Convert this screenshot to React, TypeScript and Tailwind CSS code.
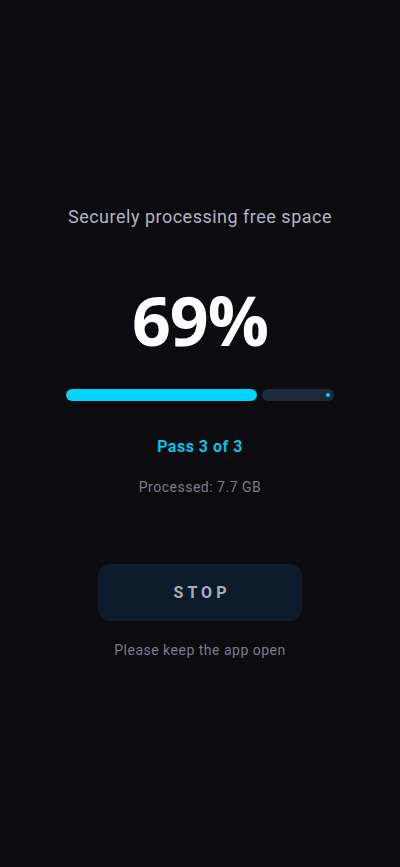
import React from "react";

export default function App() {
  return (
    <div
      className="min-h-[867px] w-full bg-[#0b0b10] flex flex-col items-center tracking-[0.5px]"
      style={{ fontFamily: "Roboto, 'Noto Sans', sans-serif" }}
    >
      <div className="h-[205px]" />
      <div className="text-[18px] leading-[24px] text-[#b4b4c4]">
        Securely processing free space
      </div>
      <div
        className="mt-[56px] h-[70px] flex items-center text-[68px] leading-[70px] font-bold text-white tracking-[-1px]"
        style={{ fontFamily: "'Open Sans', 'Noto Sans', sans-serif" }}
      >
        69%
      </div>
      <div className="mt-[34px] w-[268px] h-[12px] flex gap-[5px]">
        <div className="w-[191px] h-full rounded-full bg-[#00d4fb]" />
        <div className="flex-1 h-full rounded-full bg-[#1c2a3b] flex items-center justify-end pr-[4px]">
          <div className="w-[4px] h-[4px] rounded-full bg-[#00d4fb]" />
        </div>
      </div>
      <div className="mt-[35px] text-[16px] leading-[22px] font-semibold text-[#00cdf2]">
        Pass 3 of 3
      </div>
      <div className="mt-[19px] text-[14px] leading-[20px] text-[#7b7b8c]">
        Processed: 7.7 GB
      </div>
      <button className="mt-[67px] w-[204px] h-[57px] rounded-[12px] bg-[#0e1b2a] flex items-center justify-center">
        <span className="text-[16px] font-bold tracking-[4px] text-[#a9adbd] pl-[4px]">
          STOP
        </span>
      </button>
      <div className="mt-[19px] text-[14px] leading-[20px] text-[#7b7b8c]">
        Please keep the app open
      </div>
    </div>
  );
}
